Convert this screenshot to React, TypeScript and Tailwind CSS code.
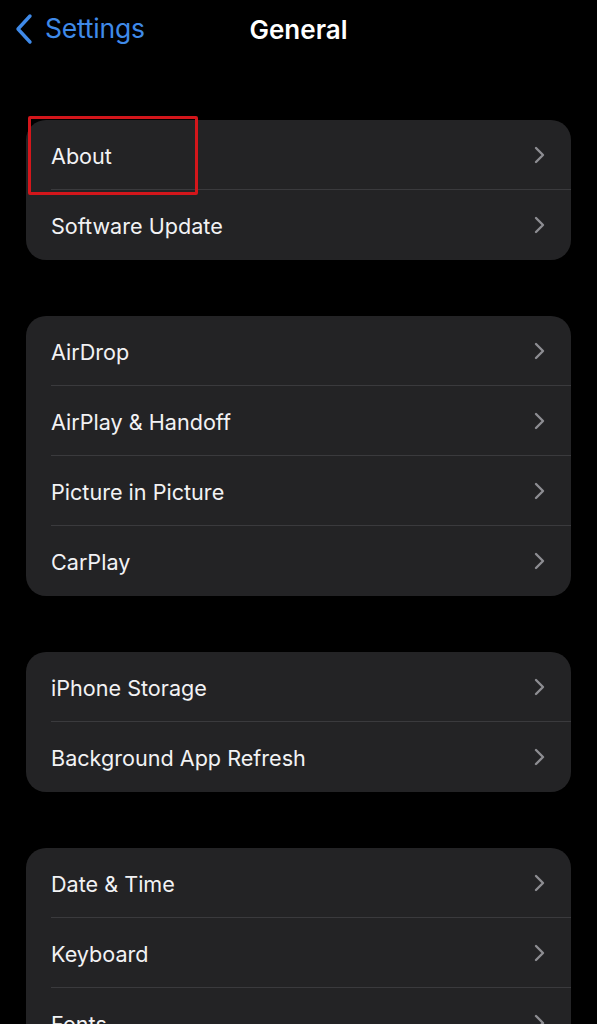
const groups: string[][] = [
  ["About", "Software Update"],
  ["AirDrop", "AirPlay & Handoff", "Picture in Picture", "CarPlay"],
  ["iPhone Storage", "Background App Refresh"],
  ["Date & Time", "Keyboard", "Fonts"],
]

function Chevron() {
  return (
    <svg width="11" height="18" viewBox="0 0 11 18" fill="none" className="text-[#8d8d92]">
      <path d="M2 2 L9 9 L2 16" stroke="currentColor" strokeWidth="2.4" strokeLinecap="round" strokeLinejoin="round" />
    </svg>
  )
}

function Row({ label, last }: { label: string; last: boolean }) {
  return (
    <div className="relative flex h-[70px] items-center pl-[25px] pr-[26px]">
      <span className="flex-1 pt-[2px] text-[21.6px] text-[#f2f2f4]">{label}</span>
      <Chevron />
      {!last && <div className="absolute bottom-0 left-[25px] right-0 h-px bg-[#3a3a3d]" />}
    </div>
  )
}

export default function App() {
  return (
    <div
      className="relative h-[1024px] w-[597px] overflow-hidden bg-black"
      style={{ fontFamily: "Inter, 'Noto Sans', sans-serif" }}
    >
      {/* nav bar */}
      <div className="relative flex h-[58px] items-center">
        <div className="flex items-center pl-[13px] text-[#3f8ae9]">
          <svg width="22" height="32" viewBox="0 0 22 32" fill="none">
            <path d="M17 3 L5 16 L17 29" stroke="currentColor" strokeWidth="3.4" strokeLinecap="round" strokeLinejoin="round" />
          </svg>
          <span className="ml-[10px] text-[26.5px] tracking-[-0.2px]">Settings</span>
        </div>
        <div className="absolute left-0 right-0 text-center text-[26px] font-semibold text-white">General</div>
      </div>

      <div className="flex flex-col gap-[56px] px-[26px] pt-[62px]">
        {groups.map((g, gi) => (
          <div key={gi} className="overflow-hidden rounded-[20px] bg-[#232325]">
            {g.map((label, i) => (
              <Row key={label} label={label} last={i === g.length - 1} />
            ))}
          </div>
        ))}
      </div>

      {/* red highlight box */}
      <div className="absolute left-[28px] top-[116px] h-[79px] w-[170px] rounded-[2px] border-[3px] border-[#d3161b]" />
    </div>
  )
}
